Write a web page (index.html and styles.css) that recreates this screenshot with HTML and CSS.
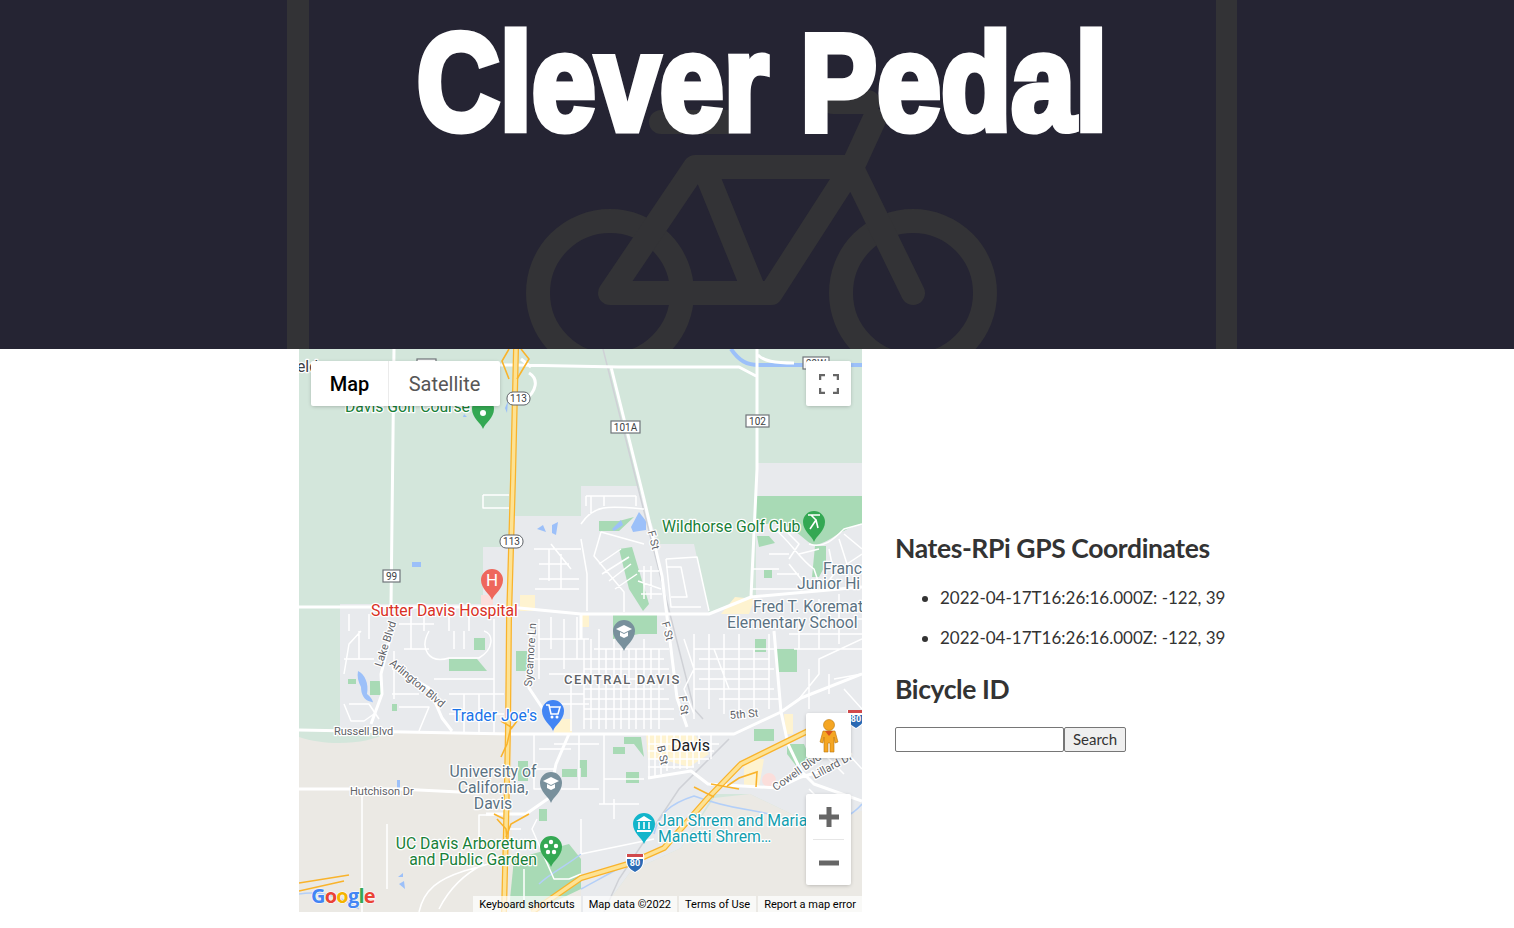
FILE: index.html
```html
<!DOCTYPE html>
<html lang="en">
<head>
  <meta charset="UTF-8" />
  <title>Clever Pedal</title>
  <link rel="stylesheet" href="styles.css">
</head>
<body>
  <header id="banner">
    <!-- faint bike lane sign behind the title -->
    <svg class="banner-art" viewBox="0 0 1514 349">
      <rect x="287" y="0" width="22" height="349" />
      <rect x="1216" y="0" width="21" height="349" />
      <g class="bike">
        <circle cx="610" cy="293" r="72" />
        <circle cx="913" cy="293" r="72" />
        <path d="M874 120 L852 168 M833 102 H868 M661 122 H727 M695 167 H852 L771 293 H610 L695 167 M705 170 L755 293 M852 168 L913 293" />
      </g>
    </svg>
    <h1>Clever Pedal</h1>
  </header>

  <main id="content">
    <div id="map">
      <svg class="map-art" viewBox="0 0 563 563">
        <defs>
          <path id="pin" d="M0 20 C-2 14 -11 9 -11 0 A11 11 0 1 1 11 0 C11 9 2 14 0 20Z" />
          <g id="i80">
            <path class="shield-white" d="M-9 -8 H9 C10 0 9 7 0 11 C-9 7 -10 0 -9 -8Z" />
            <path class="shield-blue" d="M-8 -3 H8 C8 3 7 6 0 10 C-7 6 -8 3 -8 -3Z" />
            <path class="shield-red" d="M-8 -8 H8 V-5 H-8Z" />
          </g>
        </defs>

        <!-- land -->
        <rect class="land-green" width="563" height="563" />
        <path class="land-beige" d="M0 383 H213 V563 H0Z" />
        <path class="land-green" d="M0 383 H90 C70 395 30 398 0 388Z" />
        <path class="land-urban" d="M41 255 H184 V198 H210 V167 H282 V137 H339 L360 195 H395 L410 264 L452 248 H457 V147 H563 V470 L501 469 L451 445 H415 L382 499 L332 522 L315 545 L300 563 H213 V383 H41Z" />
        <path class="land-beige" d="M563 462 L501 469 L451 445 L415 449 L382 499 L332 522 L315 545 L300 563 H563Z" />
        <rect class="land-urban" x="457" y="114" width="106" height="33" />
        <path class="land-beige" d="M210 505 H282 V563 H210Z" />

        <!-- parks -->
        <g class="park">
          <path d="M457 147 H563 V175 C540 180 530 195 515 196 C500 190 490 165 457 178Z" />
          <path d="M300 172 H320 L335 168 L320 182 H300Z" />
          <path d="M320 200 L333 198 L350 255 L344 262 L330 240Z" />
          <path d="M458 187 H470 L476 194 L460 198Z" />
          <rect x="465" y="221" width="8" height="8" />
          <path d="M516 197 H527 V215 L520 228 H513Z" />
          <path d="M314 266 H358 V285 H340 L314 290Z" />
          <path d="M150 310 H178 L188 322 H150Z" />
          <rect x="175" y="289" width="11" height="12" />
          <path d="M217 302 H228 V322 H217Z" />
          <rect x="49" y="330" width="8" height="5" />
          <rect x="71" y="332" width="11" height="14" />
          <rect x="93" y="355" width="5" height="7" />
          <rect x="456" y="290" width="11" height="13" />
          <rect x="478" y="300" width="20" height="23" />
          <rect x="455" y="380" width="20" height="12" />
          <path d="M325 388 H342 L345 408 L335 395 H325Z" />
          <rect x="314" y="398" width="12" height="7" />
          <rect x="327" y="423" width="13" height="11" />
          <rect x="282" y="418" width="6" height="10" />
          <rect x="219" y="412" width="10" height="20" />
          <rect x="240" y="460" width="8" height="12" />
          <rect x="280" y="411" width="8" height="8" />
          <rect x="270" y="420" width="8" height="8" />
          <rect x="263" y="420" width="9" height="8" />
          <path d="M488 395 H505 L512 412 L498 418 L488 405Z" />
          <path d="M215 510 L270 495 L282 510 V540 L240 560 H210Z" />
        </g>

        <!-- built up bits -->
        <g class="retail">
          <path d="M347 385 H395 L410 405 L390 418 L362 410 H349Z" />
          <path d="M485 365 H494 V385 H487Z" />
          <path d="M445 410 H465 L460 438 H445Z" />
          <path d="M436 248 L422 265 H450 L456 250Z" />
          <rect x="221" y="246" width="15" height="16" />
          <rect x="282" y="266" width="8" height="12" />
          <rect x="255" y="370" width="18" height="14" />
        </g>
        <rect class="hospital" x="182" y="246" width="12" height="11" />
        <circle class="hospital" cx="470" cy="431" r="7" />

        <!-- water -->
        <g class="water">
          <path class="canal" d="M432 0 C440 12 448 16 460 16 H563" />
          <path class="stream" d="M342 506 C320 520 300 530 282 540 M355 485 C360 465 370 455 395 447 C430 460 450 460 470 465 M500 470 C530 478 550 470 563 455 M240 535 C250 525 270 515 282 505" />
          <path d="M332 178 L340 163 L347 172 L347 181 L334 183Z" />
          <path d="M313 180 L322 171 L324 176 L315 182Z" />
          <path d="M59 322 C66 325 70 335 68 345 C74 350 75 355 73 353 C65 352 62 345 62 338 C59 333 58 327 59 322Z" />
          <rect x="113" y="213" width="9" height="5" />
          <rect x="98" y="431" width="3" height="8" />
          <path d="M104 524 L99 528 H104ZM105 532 L100 535 L106 540Z" />
          <path d="M0 545 C20 542 40 546 60 560" class="stream" />
          <path d="M238 180 L244 176 L247 183 Z M253 176 L259 173 L257 186 L253 184Z" />
          <path d="M206 59 L209 52 L208 64 Z M165 65 L168 68 H164Z" />
        </g>

        <!-- rail line -->
        <path class="rail" d="M304 0 L352 190 L395 360 L404 370 M430 390 L380 440 L320 530 L305 563" />

        <!-- streets -->
        <path class="street-major" d="M0 16 H217 L320 18 H440 L457 27 M458 0 V120 L452 248 M459 6 C465 12 475 14 495 14 M95 0 L92 258 M0 258 H210 L282 265 H410 L452 248 L563 238 M312 18 L345 150 L363 227 L378 349 L388 378 M0 381 L213 385 H435 L482 363 L502 349 L563 325 M0 440 H100 L180 444 M93 282 L82 325 L83 345 L72 375 M93 317 L130 339 L143 369 L153 382 M232 282 L230 339 L250 369 M475 282 L482 363 L489 395 L502 422 L515 435 L563 452 M270 385 L257 415 L250 449 L227 465 H187 M349 429 L392 422 L409 435 L479 439 L502 428 L530 420 M282 265 V290 M230 24 C240 30 238 42 225 52 M222 10 L232 18" />
        <path class="street" d="M184 146 H210 M184 146 V159 H210 M63 445 V563 M120 563 C125 540 140 530 165 522 L200 512
          M282 175 C295 155 310 157 345 160 M287 147 H337 M287 147 V157 M292 147 V165 M305 147 V157 M337 147 V157
          M302 183 L295 207 L325 243 V263 M300 215 L322 200 M303 225 L330 208 M310 232 L332 215 M316 240 L338 225 M345 195 L302 183
          M339 222 H360 M339 232 L362 240 M342 245 H363 M345 217 V250 M352 217 V250
          M367 210 L398 208 L410 262 M367 210 L372 258 H402 M367 218 H382 L388 248 H372
          M282 190 L288 225 V262 M270 200 H282 M252 195 L272 220 M235 200 H282 M240 215 H270 M240 230 H280 M250 200 V232 M262 205 V240 M236 240 H280
          M475 180 C490 190 500 210 515 220 L520 235 M480 175 L500 195 L490 210 M510 195 C525 200 535 190 545 180 L563 175 M530 200 L535 225 L525 238 M540 190 L548 215 L563 205 M452 220 H480 M452 240 H500 M490 215 L510 240 M545 185 L563 200 M500 205 L520 200 M470 205 H490 M478 225 H500
          M130 282 C120 300 130 315 150 309 H180 C195 300 195 285 185 282 M155 282 V300 M165 282 V300 M62 282 L50 295 L45 325 M45 310 H75 M60 282 V310 M45 355 L52 372 H65 L75 365 M50 355 H70 L80 370 M95 302 V350 M93 320 H105 M93 345 H120 M135 330 H195 V385 M150 345 H205 M165 345 V385 M180 345 V385 M150 365 H205 M112 264 V300 M125 264 V282 M100 275 H135 M50 265 V282 M70 265 V290 M150 265 V282 M170 265 V282 M195 270 V330 M105 300 H130 M100 358 H130 L120 382
          M240 270 V330 M252 268 V300 M265 270 V320 M278 268 V310 M240 290 H290 M236 310 H285 M250 325 H290 M250 345 H285 M262 355 H290 M272 330 V382
          M285 290 V380 M300 280 V380 M315 290 V380 M330 300 V380 M345 290 V380 M360 300 V380 M292 290 V380 M307 300 V380 M322 300 V380 M337 300 V380 M352 300 V380 M295 300 H370 M285 320 H370 M285 340 H365 M285 360 H375 M285 310 H365 M285 330 H365 M285 350 H370 M285 370 H375
          M395 285 V370 M410 285 V360 M425 285 V365 M440 285 V365 M455 300 V360 M470 285 V360 M395 300 H475 M395 320 H475 M395 340 H475 M420 350 H480 M400 310 H470 M400 330 H470 M385 290 L395 320 L385 340 L395 365 M415 300 L430 340
          M500 350 L520 325 V310 L563 290 M510 360 V320 M530 345 V325 M495 300 H563 M490 285 H563 M500 268 V300 M520 250 V300 M540 245 V295 M510 270 H563 M535 330 L563 325 M545 340 L563 360
          M350 385 V430 M362 385 V425 M375 385 V420 M388 385 V420 M400 385 V415 M412 385 V410 M349 395 H420 M349 410 H410 M305 385 V455 M305 430 H345 M356 385 V428 M368 385 V422 M381 385 V420 M394 385 V418 M349 402 H415 M349 418 H395
          M238 470 L233 480 L255 530 H270 L282 525 M282 470 V505 M300 455 H340 M315 450 V470 M282 505 L355 490 M540 395 L563 420 M510 440 L530 460 M525 405 L545 425 M235 385 V440 H255 M240 400 H272 M195 466 H180 V500 M222 480 H210 M225 520 V560 M140 560 C150 540 165 525 185 515 M88 475 V540 M255 395 H300 M280 385 V440 M262 440 H300 M235 420 H255" />

        <!-- highways -->
        <g class="freeway">
          <path d="M217 0 L214 130 L210 270 L209 380 L207 480 L205 563" />
          <path d="M563 372 L509 382 L442 415 L409 449 L365 499 L329 515 L282 529 L233 563" />
        </g>
        <g class="freeway-inner">
          <path d="M217 0 L214 130 L210 270 L209 380 L207 480 L205 563" />
          <path d="M563 372 L509 382 L442 415 L409 449 L365 499 L329 515 L282 529 L233 563" />
        </g>
        <path class="ramp" d="M210 0 L203 12 L210 30 M222 0 L230 10 L218 30 M202 372 L212 378 L208 395 L202 408 M218 372 L212 380 M195 465 L205 470 M230 465 L212 475 L207 488 M198 470 L207 480 L208 490 M428 437 L440 429 L458 423 L457 438 M412 435 L440 440 M395 438 L415 448 M0 534 L50 526 M0 542 L45 532" />

        <!-- shields -->
        <g class="shield-round"><rect x="208" y="43" width="23" height="13" rx="6" /><text x="219.500" y="53">113</text></g>
        <g class="shield-round"><rect x="201" y="186" width="23" height="13" rx="6" /><text x="212.500" y="196">113</text></g>
        <g class="shield-box"><rect x="84" y="221" width="17" height="12" /><text x="92.500" y="231">99</text></g>
        <g class="shield-box"><rect x="312" y="72" width="29" height="12" /><text x="326.500" y="82">101A</text></g>
        <g class="shield-box"><rect x="447" y="66" width="23" height="12" /><text x="458.500" y="76">102</text></g>
        <g class="shield-box"><rect x="118" y="10" width="19" height="12" /><text x="127.500" y="20">99</text></g>
        <g class="shield-box"><rect x="504" y="8" width="26" height="12" /><text x="517" y="18">99W</text></g>
        <use href="#i80" x="336" y="513" />
        <text class="shield-num" x="336" y="517">80</text>
        <use href="#i80" x="557" y="369" />
        <text class="shield-num" x="557" y="373">80</text>

        <!-- place labels -->
        <text class="lbl lbl-grey" x="-2" y="23">eld</text>
        <text class="lbl lbl-green" x="46" y="63">Davis Golf Course</text>
        <text class="lbl lbl-green" x="363" y="183">Wildhorse Golf Club</text>
        <text class="lbl lbl-slate" x="524" y="225">Franc</text>
        <text class="lbl lbl-slate" x="498" y="240">Junior Hi</text>
        <text class="lbl lbl-slate" x="454" y="263">Fred T. Koremat</text>
        <text class="lbl lbl-slate" x="428" y="279">Elementary School</text>
        <text class="lbl lbl-red" x="72" y="267">Sutter Davis Hospital</text>
        <text class="lbl lbl-blue" x="153" y="372">Trader Joe's</text>
        <text class="lbl lbl-slate" x="194" y="428" text-anchor="middle">University of</text>
        <text class="lbl lbl-slate" x="194" y="444" text-anchor="middle">California,</text>
        <text class="lbl lbl-slate" x="194" y="460" text-anchor="middle">Davis</text>
        <text class="lbl lbl-green" x="238" y="500" text-anchor="end">UC Davis Arboretum</text>
        <text class="lbl lbl-green" x="238" y="516" text-anchor="end">and Public Garden</text>
        <text class="lbl lbl-teal" x="359" y="477">Jan Shrem and Maria</text>
        <text class="lbl lbl-teal" x="359" y="493">Manetti Shrem…</text>
        <text class="lbl lbl-district" x="265" y="335">CENTRAL DAVIS</text>
        <text class="lbl lbl-city" x="372" y="402">Davis</text>

        <!-- street labels -->
        <text class="road" x="35" y="386">Russell Blvd</text>
        <text class="road" x="51" y="446">Hutchison Dr</text>
        <text class="road" x="431" y="370" transform="rotate(-5 431 370)">5th St</text>
        <text class="road" transform="translate(351 192) rotate(75)" text-anchor="middle">F St</text>
        <text class="road" transform="translate(365 283) rotate(75)" text-anchor="middle">F St</text>
        <text class="road" transform="translate(381 357) rotate(82)" text-anchor="middle">F St</text>
        <text class="road" transform="translate(360 407) rotate(78)" text-anchor="middle">B St</text>
        <text class="road" transform="translate(235 306) rotate(-86)" text-anchor="middle">Sycamore Ln</text>
        <text class="road" transform="translate(90 296) rotate(-72)" text-anchor="middle">Lake Blvd</text>
        <text class="road" transform="translate(116 337) rotate(40)" text-anchor="middle">Arlington Blvd</text>
        <text class="road" transform="translate(500 426) rotate(-35)" text-anchor="middle">Cowell Blvd</text>
        <text class="road" transform="translate(535 420) rotate(-28)" text-anchor="middle">Lillard Dr</text>

        <!-- markers -->
        <g transform="translate(184 60)"><use href="#pin" class="pin-green" /><circle class="pin-mark" cx="0" cy="4" r="3" /></g>
        <g transform="translate(515 173)">
          <use href="#pin" class="pin-green" />
          <path class="pin-line" d="M-6 -7 H6 M-3 -7 L2 -2 L-2 4 M2 -2 L4 6 M-2 4 L-4 7" />
        </g>
        <g transform="translate(193 231)">
          <use href="#pin" class="pin-red" />
          <text class="pin-letter" x="0" y="6">H</text>
        </g>
        <g transform="translate(325 282)">
          <use href="#pin" class="pin-slate" />
          <path class="pin-mark" d="M-8 -2 L0 -6 L8 -2 L0 2Z M-4 1 V5 L0 7 L4 5 V1 L0 3Z" />
        </g>
        <g transform="translate(254 362)">
          <use href="#pin" class="pin-blue" />
          <path class="pin-line" d="M-7 -6 H-4 L-2 3 H5 L7 -4 H-3" />
          <circle class="pin-mark" cx="-1" cy="6" r="1.500" />
          <circle class="pin-mark" cx="4" cy="6" r="1.500" />
        </g>
        <g transform="translate(252 434)">
          <use href="#pin" class="pin-slate" />
          <path class="pin-mark" d="M-8 -2 L0 -6 L8 -2 L0 2Z M-4 1 V5 L0 7 L4 5 V1 L0 3Z" />
        </g>
        <g transform="translate(252 498)">
          <use href="#pin" class="pin-green" />
          <circle class="pin-mark" cx="0" cy="-5" r="2.200" />
          <circle class="pin-mark" cx="-5" cy="-1" r="2.200" />
          <circle class="pin-mark" cx="5" cy="-1" r="2.200" />
          <circle class="pin-mark" cx="-3" cy="5" r="2.200" />
          <circle class="pin-mark" cx="3" cy="5" r="2.200" />
        </g>
        <g transform="translate(345 475)">
          <use href="#pin" class="pin-teal" />
          <path class="pin-mark" d="M-8 -3 L0 -8 L8 -3Z M-7 6 H7 V8 H-7Z" />
          <path class="pin-line" d="M-5 -2 V5 M0 -2 V5 M5 -2 V5" />
        </g>

        <!-- google logo -->
        <text class="logo" x="12" y="554"><tspan class="g-blue">G</tspan><tspan class="g-red">o</tspan><tspan class="g-yellow">o</tspan><tspan class="g-blue">g</tspan><tspan class="g-green">l</tspan><tspan class="g-red">e</tspan></text>
      </svg>

      <!-- map controls -->
      <div class="map-type">
        <div class="type-btn type-active">Map</div>
        <div class="type-btn">Satellite</div>
      </div>
      <div class="map-btn fullscreen">
        <svg width="20" height="20" viewBox="0 0 20 20"><path d="M1 6 V1 H6 M14 1 H19 V6 M19 14 V19 H14 M6 19 H1 V14" /></svg>
      </div>
      <div class="map-btn pegman">
        <svg width="20" height="34" viewBox="0 0 20 34">
          <circle class="peg-body" cx="10" cy="6" r="5.500" />
          <path class="peg-body" d="M4 12 H16 L19 23 L16 24 L15 18 V33 H11 V24 H9 V33 H5 V18 L4 24 L1 23Z" />
          <path class="peg-tie" d="M6 12 L10 17 L14 12Z" />
        </svg>
      </div>
      <div class="zoom-box">
        <div class="zoom-btn"><svg width="20" height="20" viewBox="0 0 20 20"><path d="M0 10 H20 M10 0 V20" /></svg></div>
        <div class="zoom-line"></div>
        <div class="zoom-btn"><svg width="20" height="20" viewBox="0 0 20 20"><path d="M0 10 H20" /></svg></div>
      </div>
      <div class="attrib">
        <span class="attrib-item">Keyboard shortcuts</span>
        <span class="attrib-item attrib-sep">Map data ©2022</span>
        <span class="attrib-item">Terms of Use</span>
        <span class="attrib-item">Report a map error</span>
      </div>
    </div>

    <section id="info">
      <h2>Nates-RPi GPS Coordinates</h2>
      <ul>
        <li>2022-04-17T16:26:16.000Z: -122, 39</li>
        <li>2022-04-17T16:26:16.000Z: -122, 39</li>
      </ul>
      <h2>Bicycle ID</h2>
      <form class="search">
        <input type="text">
        <button type="button">Search</button>
      </form>
    </section>
  </main>
</body>
</html>
```

FILE: styles.css
```css
html, body { margin: 0; padding: 0; background: #fff; }
body { font-family: "Lato", "Open Sans", sans-serif; color: #333; overflow: hidden; }

/* banner */
#banner { position: relative; height: 349px; background: #252433; overflow: hidden; }
.banner-art { position: absolute; left: 0; top: 0; width: 1514px; height: 349px; fill: #333336; }
.bike { fill: none; stroke: #333336; stroke-width: 24px; stroke-linecap: round; stroke-linejoin: round; }
#banner h1 { position: relative; margin: 0; padding: 3px 0 0 10px; text-align: center; color: #fff; font-family: "Liberation Sans", Arial, sans-serif; font-weight: 700; font-size: 115px; line-height: 130px; letter-spacing: 0; -webkit-text-stroke: 6px #fff; transform-origin: top center; transform: scale(1, 1.2); }

/* page */
#content { display: flex; align-items: center; padding-left: 299px; gap: 33px; }
#map { position: relative; width: 563px; height: 563px; overflow: hidden; flex: none; }
.map-art { display: block; width: 563px; height: 563px; font-family: "Roboto", sans-serif; }

/* map land */
.land-green { fill: #d3e6db; }
.land-beige { fill: #ebe9e4; }
.land-urban { fill: #e8eaed; }
.park { fill: #a8dab5; }
.retail { fill: #fef3d0; }
.hospital { fill: #fbdedb; }
.water { fill: #9cc0f9; }
.canal { fill: none; stroke: #9cc0f9; stroke-width: 4px; }
.stream { fill: none; stroke: #b3cff8; stroke-width: 1.5px; }
.rail { fill: none; stroke: #cfd1d6; stroke-width: 1.5px; }
.street-major { fill: none; stroke: #fff; stroke-width: 3px; stroke-linejoin: round; }
.street { fill: none; stroke: #fff; stroke-width: 1.5px; stroke-linejoin: round; }
.freeway path { fill: none; stroke: #f9b32b; stroke-width: 6px; stroke-linejoin: round; }
.freeway-inner path { fill: none; stroke: #fde293; stroke-width: 3.500px; stroke-linejoin: round; }
.ramp { fill: none; stroke: #f9b32b; stroke-width: 1.6px; }

/* shields */
.shield-round rect { fill: #fff; stroke: #5f6368; stroke-width: 1px; }
.shield-box rect { fill: #fff; stroke: #70757a; stroke-width: 1.2px; }
.shield-round text, .shield-box text { font-size: 10px; fill: #3c4043; text-anchor: middle; }
.shield-white { fill: #fff; }
.shield-blue { fill: #2a6ab5; }
.shield-red { fill: #d1494b; }
.shield-num { font-size: 9px; font-weight: 700; fill: #fff; text-anchor: middle; }

/* map labels */
.lbl { font-size: 15.750px; paint-order: stroke; stroke: #fff; stroke-width: 2.500px; stroke-linejoin: round; }
.lbl-green { fill: #188038; }
.lbl-slate { fill: #5b7282; }
.lbl-red { fill: #d93025; }
.lbl-blue { fill: #1a73e8; }
.lbl-teal { fill: #129eaf; }
.lbl-grey { fill: #3c4043; }
.lbl-district { font-size: 13px; font-weight: 500; letter-spacing: 1.6px; fill: #5f6368; }
.lbl-city { font-size: 16px; fill: #202124; }
.road { font-size: 11px; fill: #5f6368; paint-order: stroke; stroke: #fff; stroke-width: 2.500px; stroke-linejoin: round; }

/* markers */
.pin-green { fill: #34a853; }
.pin-red { fill: #ee675c; }
.pin-slate { fill: #78909c; }
.pin-blue { fill: #4285f4; }
.pin-teal { fill: #12b5cb; }
.pin-mark { fill: #fff; }
.pin-line { fill: none; stroke: #fff; stroke-width: 1.600px; }
.pin-letter { font-size: 17px; fill: #fff; text-anchor: middle; }

/* google logo */
.logo { font-family: "Open Sans", sans-serif; font-size: 20px; font-weight: 700; letter-spacing: -0.800px; paint-order: stroke; stroke: #fff; stroke-width: 1px; }
.g-blue { fill: #4285f4; }
.g-red { fill: #ea4335; }
.g-yellow { fill: #f5b400; }
.g-green { fill: #34a853; }

/* map controls */
.map-type { position: absolute; left: 12px; top: 12px; display: flex; height: 45px; background: #fff; border-radius: 2px; box-shadow: 0 1px 4px -1px rgba(0, 0, 0, 0.3); font-family: "Roboto", sans-serif; font-size: 20px; }
.type-btn { display: flex; align-items: center; justify-content: center; width: 111px; color: #565656; }
.type-active { width: 78px; color: #000; font-weight: 500; border-right: 1px solid #ebebeb; box-sizing: border-box; }
.map-btn { position: absolute; right: 11px; width: 45px; height: 45px; display: flex; align-items: center; justify-content: center; background: #fff; border-radius: 2px; box-shadow: 0 1px 4px -1px rgba(0, 0, 0, 0.3); }
.fullscreen { top: 12px; }
.fullscreen path { fill: none; stroke: #666; stroke-width: 2.500px; }
.pegman { top: 364px; }
.peg-body { fill: #f5a623; stroke: #b9770e; stroke-width: 0.600px; }
.peg-tie { fill: #d9531e; }
.zoom-box { position: absolute; right: 11px; top: 445px; width: 45px; height: 91px; background: #fff; border-radius: 2px; box-shadow: 0 1px 4px -1px rgba(0, 0, 0, 0.3); }
.zoom-btn { height: 45px; display: flex; align-items: center; justify-content: center; }
.zoom-btn path { fill: none; stroke: #666; stroke-width: 5px; }
.zoom-line { height: 1px; margin: 0 7px; background: #e6e6e6; }
.attrib { position: absolute; right: 0; bottom: 0; display: flex; height: 16px; font-family: "Roboto", sans-serif; font-size: 11px; line-height: 17px; color: #000; }
.attrib-item { padding: 0 6px; margin-left: 2px; background: rgba(255, 255, 255, 0.7); white-space: nowrap; }
.attrib-sep { padding-left: 6px; }

/* coordinates panel */
#info { flex: none; padding-top: 21px; }
#info h2 { margin: 0; font-size: 26.500px; line-height: 34px; font-weight: 700; letter-spacing: -0.400px; }
#info ul { margin: 22px 0 23px; padding-left: 45px; font-size: 17px; line-height: 22px; }
#info li { margin-bottom: 18px; }
#info li:last-child { margin-bottom: 0; }
.search { display: flex; margin-top: 21px; }
.search input { box-sizing: border-box; width: 169px; height: 25px; margin: 0; padding: 1px 2px; border: 1px solid #767676; border-radius: 2px; background: #fff; }
.search button { box-sizing: border-box; width: 62px; height: 25px; margin: 0; padding: 0; border: 1px solid #767676; border-radius: 2px; background: #efefef; color: #333; font-family: "Lato", sans-serif; font-size: 15px; }
```
